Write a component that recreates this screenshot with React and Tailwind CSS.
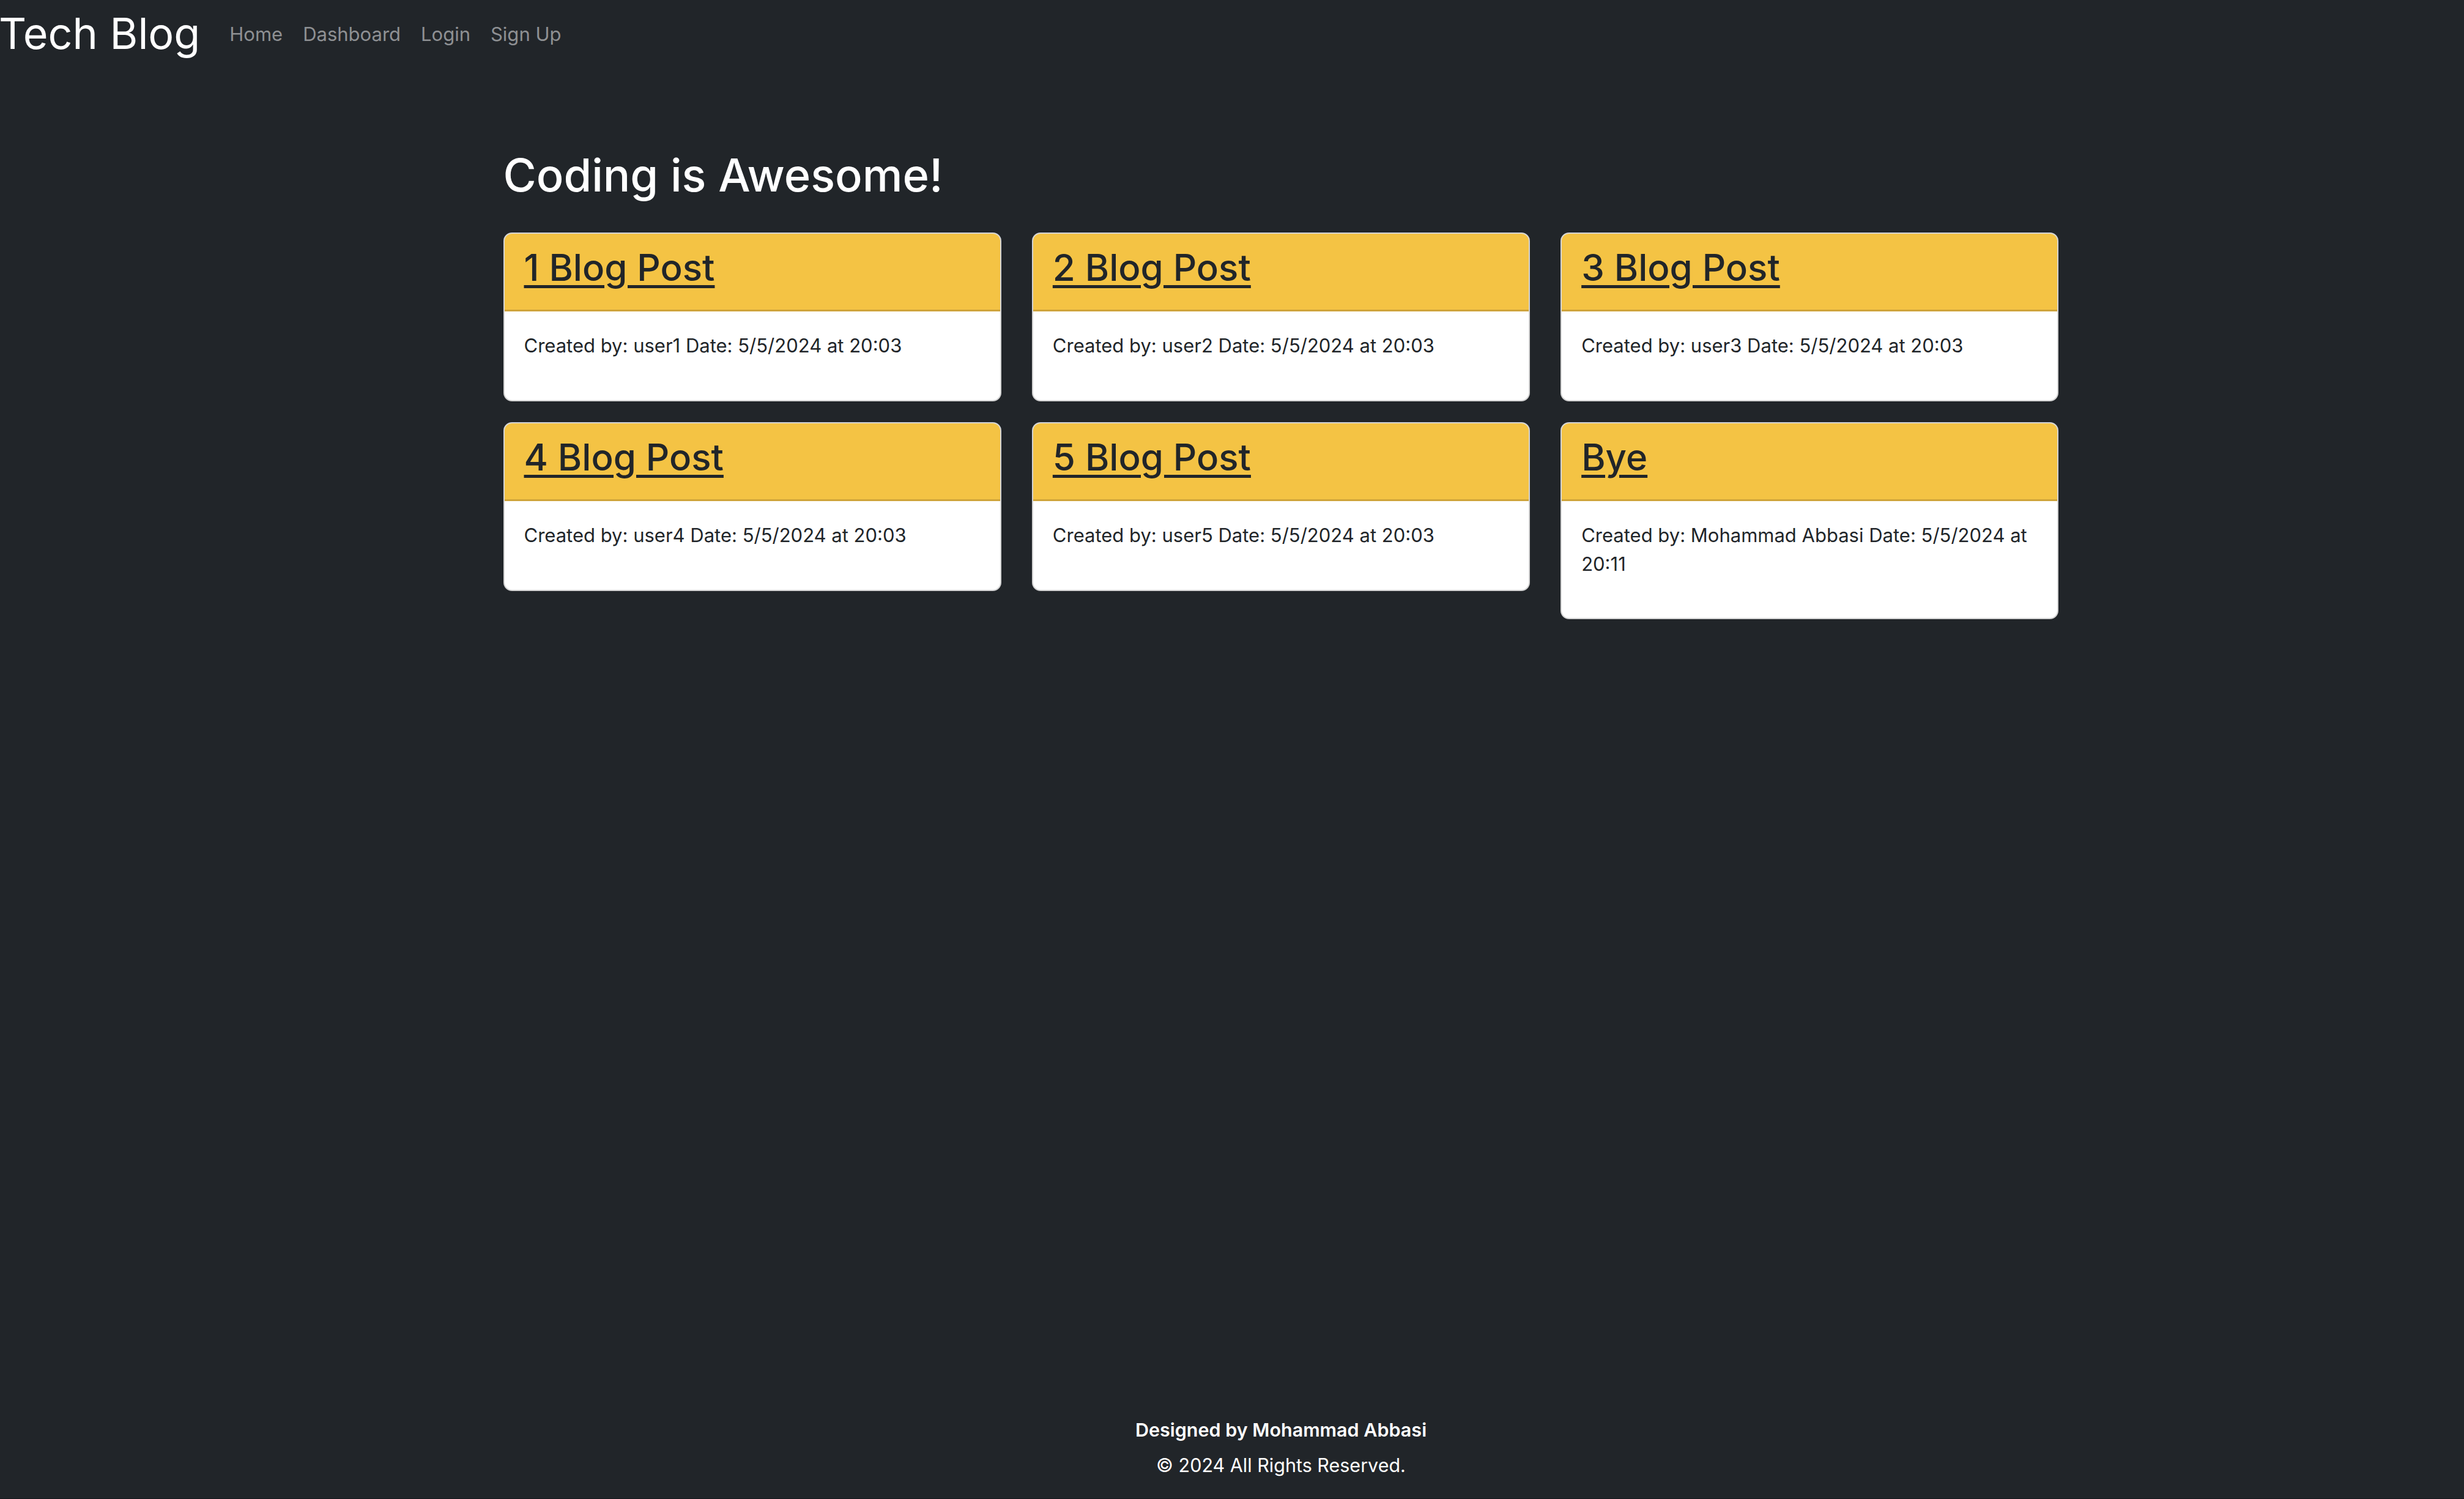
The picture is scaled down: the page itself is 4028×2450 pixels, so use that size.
import React from "react";

const posts = [
  { title: "1 Blog Post", meta: "Created by: user1 Date: 5/5/2024 at 20:03" },
  { title: "2 Blog Post", meta: "Created by: user2 Date: 5/5/2024 at 20:03" },
  { title: "3 Blog Post", meta: "Created by: user3 Date: 5/5/2024 at 20:03" },
  { title: "4 Blog Post", meta: "Created by: user4 Date: 5/5/2024 at 20:03" },
  { title: "5 Blog Post", meta: "Created by: user5 Date: 5/5/2024 at 20:03" },
  { title: "Bye", meta: "Created by: Mohammad Abbasi Date: 5/5/2024 at 20:11" },
];

function Card({ title, meta }) {
  return (
    <div className="rounded-[14px] border-2 border-[#d4d4d4] bg-white overflow-hidden">
      <div className="bg-[#f4c344] border-b-[3px] border-[#cfa43a] px-[32px] pt-[18px] pb-[16px]">
        <h2 className="m-0 mb-[16px] text-[60px] leading-[1.24] font-medium text-[#212529]">
          <a href="#" className="underline decoration-[5px] underline-offset-[7px] text-[#212529]">
            {title}
          </a>
        </h2>
      </div>
      <div className="px-[32px] pt-[33px] pb-[32px]">
        <p className="m-0 mb-[33px] text-[31px] leading-[1.5] text-[#212529]">{meta}</p>
      </div>
    </div>
  );
}

export default function App() {
  return (
    <div
      className="min-h-screen flex flex-col bg-[#212529] text-white"
      style={{ fontFamily: "Inter, 'Noto Sans', 'Liberation Sans', sans-serif" }}
    >
      <nav className="flex items-center py-[16px] h-[110px]">
        <a href="#" className="text-[70px] leading-none text-white -ml-[2px] mr-[48px]">
          Tech Blog
        </a>
        <div className="flex items-center gap-[33px] text-[31px] leading-none text-[#8e9093]">
          <a href="#">Home</a>
          <a href="#">Dashboard</a>
          <a href="#">Login</a>
          <a href="#">Sign Up</a>
        </div>
      </nav>

      <main className="pl-[160px]">
        <div className="mx-auto w-[2543px] pt-[132px]">
          <h1 className="m-0 mb-[49px] text-[74px] leading-[1.2] font-medium text-white">
            Coding is Awesome!
          </h1>
          <div className="grid grid-cols-3 gap-x-[50px] gap-y-[34px] items-start">
            {posts.map((p) => (
              <Card key={p.title} {...p} />
            ))}
          </div>
        </div>
      </main>

      <footer className="mt-auto pl-[160px] pb-[32px] text-center text-white border-b border-[#16181b]">
        <p className="m-0 mb-[13px] text-[30.5px] leading-[45px] font-semibold">Designed by Mohammad Abbasi</p>
        <p className="m-0 text-[30.5px] leading-[45px]">© 2024 All Rights Reserved.</p>
      </footer>
    </div>
  );
}
